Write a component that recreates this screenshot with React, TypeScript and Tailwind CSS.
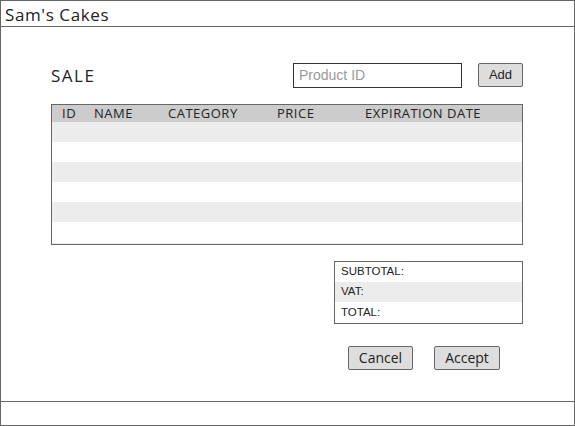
import React from "react";

const cols = [
  { label: "ID", w: "w-[32px]" },
  { label: "NAME", w: "w-[74px]" },
  { label: "CATEGORY", w: "w-[109px]" },
  { label: "PRICE", w: "w-[88px]" },
  { label: "EXPIRATION DATE", w: "flex-1" },
];

export default function App() {
  const rows = [0, 1, 2, 3, 4, 5];
  return (
    <div className="w-[575px] h-[426px] bg-white border border-[#666] flex flex-col text-[#222] font-['Open_Sans','Liberation_Sans',sans-serif]">
      <div className="h-[26px] border-b border-[#666] flex items-center px-[4px] pt-[2px]">
        <span className="text-[17px] font-medium leading-none tracking-[0.6px]">Sam's Cakes</span>
      </div>

      <div className="flex-1 flex flex-col pl-[50px] pr-[51px] pt-[36px]">
        <div className="flex items-center h-[24px]">
          <h1 className="text-[17px] font-medium leading-none tracking-[1.5px]">SALE</h1>
          <div className="ml-auto flex items-center gap-[16px]">
            <input
              placeholder="Product ID"
              className="w-[169px] h-[25px] border border-[#333] px-[5px] text-[14px] font-['Liberation_Sans',sans-serif] placeholder:text-[#999] outline-none"
            />
            <button className="w-[45px] h-[24px] bg-[#ddd] border border-[#666] rounded-[2px] text-[13px] font-['Liberation_Sans',sans-serif]">
              Add
            </button>
          </div>
        </div>

        <div className="mt-[17px] border border-[#666] h-[141px] flex flex-col">
          <div className="h-[17px] bg-[#ccc] flex items-center pl-[10px] text-[13px] font-medium tracking-[0.5px] leading-none">
            {cols.map((c) => (
              <div key={c.label} className={c.w}>
                {c.label}
              </div>
            ))}
          </div>
          {rows.map((r) => (
            <div
              key={r}
              className={r % 2 === 0 ? "h-[20px] bg-[#ececec]" : "h-[20px] bg-white"}
            />
          ))}
          <div className="flex-1 border-b border-[#eee]" />
        </div>

        <div className="self-end mt-[16px] w-[189px] border border-[#666] text-[11.5px] font-['Liberation_Sans',sans-serif] leading-none">
          <div className="h-[20px] flex items-center px-[6px]">SUBTOTAL:</div>
          <div className="h-[20px] flex items-center px-[6px] bg-[#ececec]">VAT:</div>
          <div className="h-[21px] flex items-center px-[6px]">TOTAL:</div>
        </div>

        <div className="self-end mr-[23px] mt-[22px] flex gap-[21px]">
          <button className="w-[65px] h-[24px] bg-[#ddd] border border-[#666] rounded-[2px] text-[14px] font-medium leading-none pb-[1px]">
            Cancel
          </button>
          <button className="w-[66px] h-[24px] bg-[#ddd] border border-[#666] rounded-[2px] text-[14px] font-medium leading-none pb-[1px]">
            Accept
          </button>
        </div>
      </div>

      <div className="h-[24px] border-t border-[#666]" />
    </div>
  );
}
